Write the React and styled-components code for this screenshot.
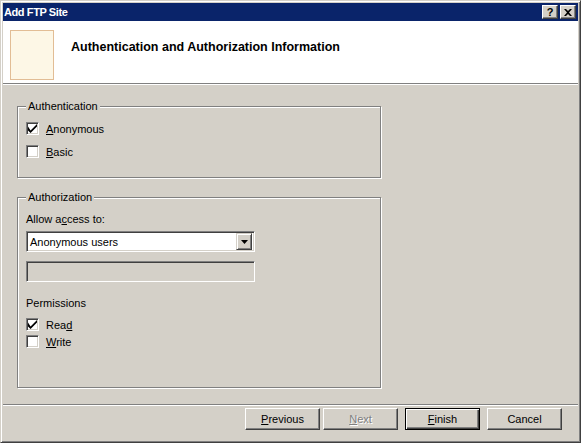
import React from 'react';
import styled, { createGlobalStyle } from 'styled-components';

const GlobalStyle = createGlobalStyle`
  html, body { margin: 0; padding: 0; background: #d4d0c8; }
  body { font-family: "Liberation Sans", Arial, sans-serif; font-size: 11px; color: #000; }
  * { box-sizing: border-box; }
`;

const Window = styled.div`
  width: 581px;
  height: 443px;
  background: #d4d0c8;
  border: 1px solid;
  border-color: #d4d0c8 #404040 #404040 #d4d0c8;
  box-shadow: inset 1px 1px 0 #fff, inset -1px -1px 0 #808080;
  padding: 2px;
  display: flex;
  flex-direction: column;
`;

const TitleBar = styled.div`
  height: 18px;
  flex: none;
  background: #0a246a;
  color: #fff;
  font-weight: bold;
  display: flex;
  align-items: center;
  padding: 0 2px 0 1px;
`;

const TitleText = styled.span`
  flex: 1;
  line-height: 18px;
  letter-spacing: -0.4px;
`;

const CaptionButton = styled.button`
  width: 16px;
  height: 14px;
  margin-left: ${(p) => p.$gap || 0}px;
  padding: 0;
  background: #d4d0c8;
  border: 1px solid;
  border-color: #fff #404040 #404040 #fff;
  box-shadow: inset -1px -1px 0 #808080;
  display: flex;
  align-items: center;
  justify-content: center;
  font: bold 11px "Liberation Sans", Arial, sans-serif;
  color: #000;
`;

const Header = styled.div`
  height: 63px;
  flex: none;
  background: #fff;
  display: flex;
  align-items: flex-start;
  padding: 9px 0 0 7px;
  border-bottom: 1px solid #808080;
  box-shadow: 0 1px 0 #fff;
`;

const IconBox = styled.div`
  width: 44px;
  height: 50px;
  background: #fdf7e6;
  border: 1px solid #e2bd95;
`;

const HeaderTitle = styled.div`
  margin: 9px 0 0 17px;
  font-weight: bold;
  font-size: 12.5px;
  line-height: 16px;
`;

const Body = styled.div`
  flex: 1;
  margin-top: 1px;
  padding: 15px 0 0 14px;
  display: flex;
  flex-direction: column;
  gap: 13px;
`;

const Group = styled.fieldset`
  width: 364px;
  height: ${(p) => p.$h}px;
  margin: 0;
  padding: 0 8px;
  border: 1px solid #808080;
  box-shadow: 1px 1px 0 #fff, inset 1px 1px 0 #fff;
  display: flex;
  flex-direction: column;
`;

const Legend = styled.legend`
  padding: 0 2px;
  line-height: 13px;
  background: #d4d0c8;
`;

const CheckRow = styled.label`
  display: flex;
  align-items: center;
  height: 13px;
  margin-top: ${(p) => p.$mt}px;
`;

const Box = styled.span`
  width: 13px;
  height: 13px;
  flex: none;
  background: #fff;
  border: 1px solid;
  border-color: #808080 #fff #fff #808080;
  box-shadow: inset 1px 1px 0 #404040, inset -1px -1px 0 #d4d0c8;
  display: flex;
  align-items: center;
  justify-content: center;
  margin-right: 7px;
`;

const Caption = styled.div`
  line-height: 13px;
  margin-top: ${(p) => p.$mt}px;
`;

const Select = styled.div`
  width: 229px;
  height: 21px;
  margin-top: ${(p) => p.$mt}px;
  background: #fff;
  border: 1px solid;
  border-color: #808080 #fff #fff #808080;
  box-shadow: inset 1px 1px 0 #404040, inset -1px -1px 0 #d4d0c8;
  display: flex;
  align-items: center;
  padding: 2px;
`;

const SelectText = styled.span`
  flex: 1;
  padding-left: 1px;
`;

const DropButton = styled.span`
  width: 16px;
  height: 17px;
  background: #d4d0c8;
  border: 1px solid;
  border-color: #d4d0c8 #404040 #404040 #d4d0c8;
  box-shadow: inset 1px 1px 0 #fff, inset -1px -1px 0 #808080;
  display: flex;
  align-items: center;
  justify-content: center;
`;

const TextBox = styled.div`
  width: 229px;
  height: 21px;
  margin-top: ${(p) => p.$mt}px;
  background: #d4d0c8;
  border: 1px solid;
  border-color: #808080 #fff #fff #808080;
  box-shadow: inset 1px 1px 0 #404040, inset -1px -1px 0 #d4d0c8;
`;

const Footer = styled.div`
  flex: none;
  height: 36px;
  border-top: 1px solid #808080;
  box-shadow: inset 0 1px 0 #fff;
  display: flex;
  justify-content: flex-end;
  align-items: flex-start;
  padding: 3px 16px 0 0;
`;

const Button = styled.button`
  width: 75px;
  height: 22px;
  margin-left: ${(p) => p.$gap}px;
  padding: 0;
  background: #d4d0c8;
  font: 11px "Liberation Sans", Arial, sans-serif;
  color: ${(p) => (p.$disabled ? '#808080' : '#000')};
  text-shadow: ${(p) => (p.$disabled ? '1px 1px 0 #fff' : 'none')};
  border: 1px solid;
  border-color: ${(p) => (p.$default ? '#000' : '#fff #404040 #404040 #fff')};
  box-shadow: ${(p) =>
    p.$default
      ? 'inset 1px 1px 0 #fff, inset -1px -1px 0 #404040, inset -2px -2px 0 #808080'
      : 'inset -1px -1px 0 #808080'};
`;

const Check = () => (
  <svg width="9" height="9" viewBox="0 0 7 7">
    <path d="M0 2 L0 5 L2 7 L7 2 L7 0 L2 5 Z" fill="#000" />
  </svg>
);

const CheckBox = ({ checked, children, mt }) => (
  <CheckRow $mt={mt}>
    <Box>{checked && <Check />}</Box>
    <span>{children}</span>
  </CheckRow>
);

export default function App() {
  return (
    <>
      <GlobalStyle />
      <Window>
        <TitleBar>
          <TitleText>Add FTP Site</TitleText>
          <CaptionButton>?</CaptionButton>
          <CaptionButton $gap={2}>
            <svg width="8" height="7" viewBox="0 0 8 7">
              <path d="M0 0 L2 0 L4 2 L6 0 L8 0 L5 3.5 L8 7 L6 7 L4 5 L2 7 L0 7 L3 3.5 Z" fill="#000" />
            </svg>
          </CaptionButton>
        </TitleBar>
        <Header>
          <IconBox />
          <HeaderTitle>Authentication and Authorization Information</HeaderTitle>
        </Header>
        <Body>
          <Group $h={78}>
            <Legend>Authentication</Legend>
            <CheckBox checked mt={9}>
              <u>A</u>nonymous
            </CheckBox>
            <CheckBox mt={10}>
              <u>B</u>asic
            </CheckBox>
          </Group>
          <Group $h={197}>
            <Legend>Authorization</Legend>
            <Caption $mt={9}>
              Allow a<u>c</u>cess to:
            </Caption>
            <Select $mt={5}>
              <SelectText>Anonymous users</SelectText>
              <DropButton>
                <svg width="7" height="4" viewBox="0 0 7 4">
                  <path d="M0 0 L7 0 L3.5 4 Z" fill="#000" />
                </svg>
              </DropButton>
            </Select>
            <TextBox $mt={9} />
            <Caption $mt={15}>Permissions</Caption>
            <CheckBox checked mt={8}>
              Rea<u>d</u>
            </CheckBox>
            <CheckBox mt={4}>
              <u>W</u>rite
            </CheckBox>
          </Group>
        </Body>
        <Footer>
          <Button $gap={0}>
            <u>P</u>revious
          </Button>
          <Button $gap={3} $disabled>
            <u>N</u>ext
          </Button>
          <Button $gap={7} $default>
            <u>F</u>inish
          </Button>
          <Button $gap={7}>Cancel</Button>
        </Footer>
      </Window>
    </>
  );
}
